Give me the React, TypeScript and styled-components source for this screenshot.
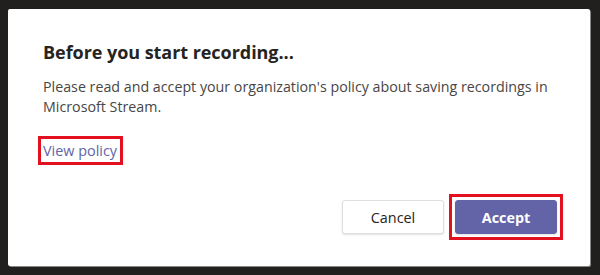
import React from 'react';
import styled, { createGlobalStyle } from 'styled-components';

const GlobalStyle = createGlobalStyle`
  html, body {
    margin: 0;
    padding: 0;
    background-color: #21201f;
  }
  #root {
    width: 600px;
    height: 275px;
  }
`;

const Backdrop = styled.div`
  width: 600px;
  height: 275px;
  box-sizing: border-box;
  padding: 9px 10px 9px 8px;
  background-color: #21201f;
`;

const Dialog = styled.div`
  width: 582px;
  height: 257px;
  box-sizing: border-box;
  background-color: #ffffff;
  border-radius: 2px;
  box-shadow: 1px 1px 0 #8a8886;
  padding: 31px 27px 26px 35px;
  display: flex;
  flex-direction: column;
  font-family: "Open Sans", "Noto Sans", sans-serif;
`;

const Title = styled.h1`
  margin: 0;
  font-size: 18px;
  line-height: 24px;
  font-weight: 700;
  color: #252423;
  letter-spacing: -0.05px;
`;

const Body = styled.p`
  margin: 13px 0 0 0;
  font-size: 14.25px;
  line-height: 20px;
  color: #484644;
  padding-right: 8px;
`;

const Highlight = styled.div<{ $inline?: boolean }>`
  border: 3px solid #e3101f;
  box-sizing: border-box;
  padding: ${(p) => (p.$inline ? '2px 3px 1px 2px' : '3px')};
  display: ${(p) => (p.$inline ? 'inline-flex' : 'flex')};
  align-self: flex-start;
`;

const LinkWrap = styled.div`
  margin-top: 19px;
  margin-left: -5px;
  display: flex;
`;

const PolicyLink = styled.a`
  font-size: 14.4px;
  line-height: 20px;
  color: #6264a7;
  text-decoration: none;
  cursor: pointer;
`;

const Actions = styled.div`
  margin-top: auto;
  display: flex;
  justify-content: flex-end;
  align-items: center;
  gap: 5px;
`;

const Button = styled.button<{ $primary?: boolean }>`
  width: 102px;
  height: 34px;
  box-sizing: border-box;
  border-radius: 3px;
  font-family: "Open Sans", "Noto Sans", sans-serif;
  font-size: 14.4px;
  font-weight: ${(p) => (p.$primary ? 700 : 400)};
  color: ${(p) => (p.$primary ? '#ffffff' : '#252423')};
  background-color: ${(p) => (p.$primary ? '#6264a7' : '#ffffff')};
  border: 1px solid ${(p) => (p.$primary ? '#6264a7' : '#e1dfdd')};
  box-shadow: 0 1px 2px rgba(0, 0, 0, 0.12);
  cursor: pointer;
  padding: 0;
`;

const App = () => {
  return (
    <>
      <GlobalStyle />
      <Backdrop>
        <Dialog>
          <Title>Before you start recording...</Title>
          <Body>
            Please read and accept your organization's policy about saving recordings in
            Microsoft Stream.
          </Body>
          <LinkWrap>
            <Highlight $inline>
              <PolicyLink>View policy</PolicyLink>
            </Highlight>
          </LinkWrap>
          <Actions>
            <Button>Cancel</Button>
            <Highlight>
              <Button $primary>Accept</Button>
            </Highlight>
          </Actions>
        </Dialog>
      </Backdrop>
    </>
  );
};

export default App;
